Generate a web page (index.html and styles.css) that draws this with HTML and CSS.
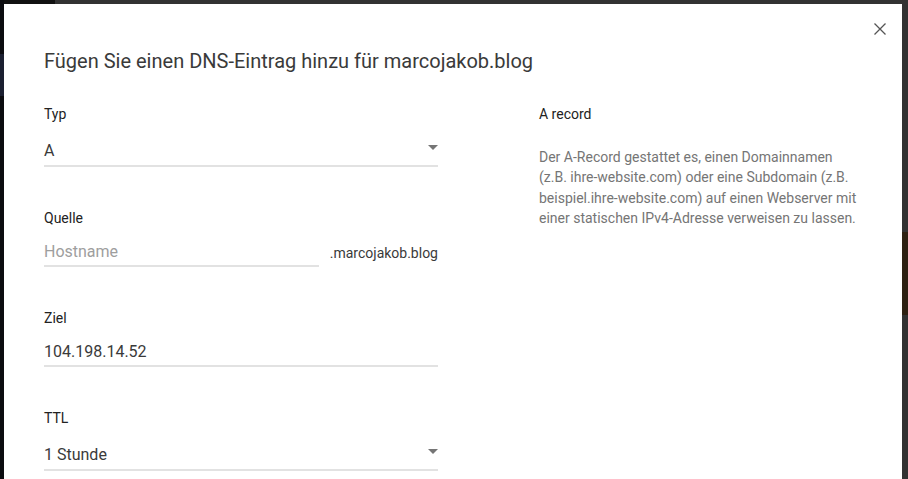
FILE: index.html
```html
<!DOCTYPE html>
<html lang="de">
<head>
<meta charset="utf-8">
<title>DNS-Eintrag hinzufügen</title>
<link rel="stylesheet" href="styles.css">
</head>
<body>
<div class="modal">
  <div class="topbar">
    <button class="close" aria-label="Schließen">
      <svg width="12" height="12" viewBox="0 0 12 12"><path d="M0.5 0.5 L11.5 11.5 M11.5 0.5 L0.5 11.5" stroke="#555" stroke-width="1.3" fill="none"/></svg>
    </button>
  </div>
  <h1 class="title">Fügen Sie einen DNS-Eintrag hinzu für marcojakob.blog</h1>
  <div class="content">
    <div class="form">
      <div class="field">
        <div class="label">Typ</div>
        <div class="control select">
          <span class="value">A</span>
          <span class="arrow"></span>
        </div>
      </div>
      <div class="field">
        <div class="label">Quelle</div>
        <div class="row">
          <div class="control input"><span class="placeholder">Hostname</span></div>
          <span class="suffix">.marcojakob.blog</span>
        </div>
      </div>
      <div class="field">
        <div class="label">Ziel</div>
        <div class="control input"><span class="value">104.198.14.52</span></div>
      </div>
      <div class="field">
        <div class="label">TTL</div>
        <div class="control select">
          <span class="value">1 Stunde</span>
          <span class="arrow"></span>
        </div>
      </div>
    </div>
    <div class="help">
      <div class="help-title">A record</div>
      <p class="help-text">Der A-Record gestattet es, einen Domainnamen (z.B. ihre-website.com) oder eine Subdomain (z.B. beispiel.ihre-website.com) auf einen Webserver mit einer statischen IPv4-Adresse verweisen zu lassen.</p>
    </div>
  </div>
</div>
</body>
</html>
```
FILE: styles.css
```css
html, body {
  margin: 0;
  height: 100%;
}
body {
  padding: 4px 6px 0 4px;
  box-sizing: border-box;
  overflow: hidden;
  font-family: Roboto, "Liberation Sans", sans-serif;
  background:
    linear-gradient(#1b2031, #1b2031) 0 54px / 4px 42px no-repeat,
    linear-gradient(#0b0c10, #0b0c10) 0 0 / 4px 100% no-repeat,
    linear-gradient(#111, #111) 0 0 / 55px 4px no-repeat,
    linear-gradient(#2e2112, #2e2112) 902px 232px / 6px 83px no-repeat,
    #323232;
}
.modal {
  background: #fff;
  height: 100%;
  box-sizing: border-box;
}
.topbar {
  display: flex;
  justify-content: flex-end;
  padding: 19px 16px 0 0;
  height: 12px;
}
.close {
  border: 0;
  background: none;
  padding: 0;
  width: 12px;
  height: 12px;
  display: block;
  cursor: pointer;
}
.close svg { display: block; }
.title {
  margin: 14px 0 0 40px;
  font-size: 20px;
  font-weight: 400;
  line-height: 24px;
  color: #3a3a3a;
}
.content {
  display: grid;
  grid-template-columns: 394px 324px;
  column-gap: 101px;
  padding: 0 40px;
  margin-top: 31px;
}
.form {
  display: flex;
  flex-direction: column;
  gap: 41px;
}
.label {
  font-size: 14px;
  line-height: 20px;
  color: #222;
}
.control {
  display: flex;
  align-items: center;
  border-bottom: 2px solid #e2e2e2;
  font-size: 16px;
  line-height: 24px;
}
.input {
  margin-top: 12px;
  padding-bottom: 1px;
}
.select {
  margin-top: 15px;
  padding-bottom: 2px;
}
.value { color: #3a3a3a; flex: 1; }
.placeholder { color: #9e9e9e; }
.arrow {
  width: 0;
  height: 0;
  border-left: 5px solid transparent;
  border-right: 5px solid transparent;
  border-top: 5px solid #757575;
  margin-top: -8px;
}
.row {
  display: flex;
  align-items: flex-start;
}
.row .input { flex: 1; }
.suffix {
  margin: 13px 0 0 11px;
  font-size: 14px;
  line-height: 24px;
  color: #3a3a3a;
}
.help-title {
  font-size: 14px;
  line-height: 20px;
  color: #222;
}
.help-text {
  margin: 23px 0 0;
  font-size: 14px;
  line-height: 20.3px;
  color: #757575;
}
```
